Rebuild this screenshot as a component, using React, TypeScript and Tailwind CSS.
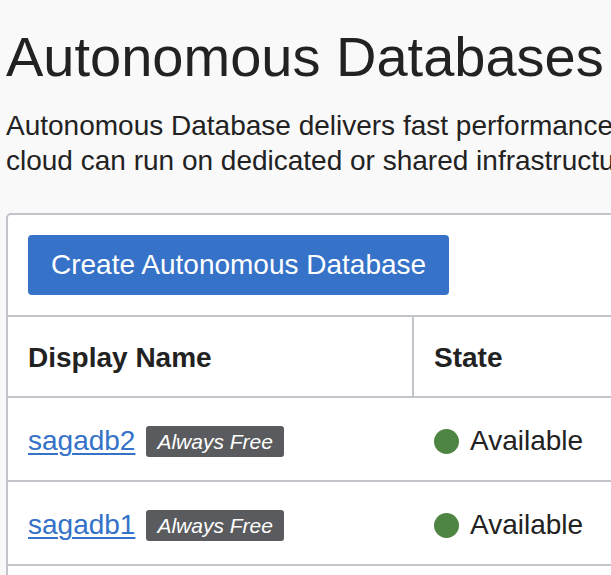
import React from "react";

const font = { fontFamily: '"Liberation Sans", Arial, Helvetica, sans-serif' };

function Row({ name }: { name: string }) {
  return (
    <div className="grid grid-cols-[404px_1fr] border-t-2 border-[#c1c4c9]">
      <div className="flex h-[82px] items-center pl-5 pt-[4px]">
        <a
          href="#"
          className="text-[28px] leading-none text-[#3572c8] underline decoration-[1.5px] underline-offset-[3px]"
        >
          {name}
        </a>
        <span className="ml-[11px] flex h-[31px] items-center rounded-[3px] bg-[#5a5b5e] px-[11px] text-[21px] italic leading-none text-white">
          Always Free
        </span>
      </div>
      <div className="flex h-[82px] items-center gap-[11px] border-l-2 border-transparent pl-5 pt-[4px]">
        <span className="h-[25px] w-[25px] rounded-full bg-[#4f8542]" />
        <span className="text-[28px] leading-none text-[#222]">Available</span>
      </div>
    </div>
  );
}

export default function App() {
  return (
    <div
      className="h-[575px] w-[611px] overflow-hidden bg-[#f9f9f9] pl-[6px] pt-[25px] text-[#222]"
      style={font}
    >
      <h1 className="whitespace-nowrap text-[56px] font-normal leading-[64px] text-[#222]">
        Autonomous Databases
      </h1>
      <p className="mt-[19px] w-[1200px] whitespace-nowrap text-[28px] leading-[35px] text-[#222]">
        Autonomous Database delivers fast performance, automated management and elastic scaling. Autonomous Database in the Oracle
        <br />
        cloud can run on dedicated or shared infrastructure.
      </p>
      <div className="mt-[35px] w-[900px] rounded-[5px] border-2 border-[#c1c4c9] bg-white">
        <div className="p-5">
          <button className="flex h-[60px] items-center rounded-[4px] bg-[#3572c8] px-[23px] text-[28px] leading-none text-white">
            Create Autonomous Database
          </button>
        </div>
        <div className="grid grid-cols-[404px_1fr] border-t-2 border-[#c1c4c9]">
          <div className="flex h-[79px] items-center pl-5 pt-[2px] text-[28px] font-bold leading-none text-[#222]">
            Display Name
          </div>
          <div className="flex h-[79px] items-center border-l-2 border-[#c1c4c9] pl-5 pt-[2px] text-[28px] font-bold leading-none text-[#222]">
            State
          </div>
        </div>
        <Row name="sagadb2" />
        <Row name="sagadb1" />
        <div className="h-[40px] border-t-2 border-[#c1c4c9]" />
      </div>
    </div>
  );
}
